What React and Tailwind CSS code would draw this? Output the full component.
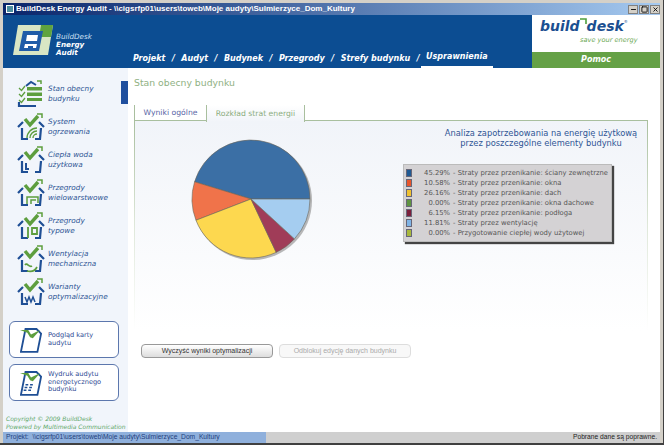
import { X, Minus, Square } from "lucide-react";

const NAV = ["Projekt", "Audyt", "Budynek", "Przegrody", "Strefy budynku", "Usprawnienia"];

const SIDE = [
  ["Stan obecny", "budynku", "list"],
  ["System", "ogrzewania", "heat"],
  ["Ciepła woda", "użytkowa", "water"],
  ["Przegrody", "wielowarstwowe", "layers"],
  ["Przegrody", "typowe", "wall"],
  ["Wentylacja", "mechaniczna", "air"],
  ["Warianty", "optymalizacyjne", "opt"],
];

const LEGEND = [
  ["#1f5a94", "45.29%", "Straty przez przenikanie: ściany zewnętrzne"],
  ["#e8552a", "10.58%", "Straty przez przenikanie: okna"],
  ["#efc12f", "26.16%", "Straty przez przenikanie: dach"],
  ["#5f9440", "0.00%", "Straty przez przenikanie: okna dachowe"],
  ["#7c1f3b", "6.15%", "Straty przez przenikanie: podłoga"],
  ["#7fb4e6", "11.81%", "Straty przez wentylację"],
  ["#a9b93c", "0.00%", "Przygotowanie ciepłej wody użytowej"],
];

const SLICES = [
  [45.29, "#3b6fa5"],
  [10.58, "#f0734a"],
  [26.16, "#fdd84f"],
  [6.15, "#a03c58"],
  [11.81, "#a5cdf0"],
];

function Pie() {
  let start = 0;
  const r = 59;
  const paths = SLICES.map(([pct, color]) => {
    const a0 = (start / 100) * Math.PI * 2;
    start += pct;
    const a1 = (start / 100) * Math.PI * 2;
    const d = `M64 64 L${64 + r * Math.cos(a0)} ${64 - r * Math.sin(a0)} A${r} ${r} 0 0 0 ${64 + r * Math.cos(a1)} ${64 - r * Math.sin(a1)} Z`;
    return <path key={color} d={d} fill={color} stroke="#6b6458" strokeWidth="0.6" />;
  });
  return (
    <svg width="134" height="134" viewBox="0 0 134 134">
      <circle cx="65.5" cy="65.5" r="59.5" fill="#8a8a8a" opacity="0.6" />
      {paths}
    </svg>
  );
}

// small house icon with the green tick, varies a bit per row
function SideIcon({ type }) {
  const blue = "#1f4f95";
  const green = "#5d9e3e";
  if (type === "list") {
    return (
      <svg width="28" height="28" viewBox="0 0 28 28" fill="none">
        <path d="M9 6 L14 2 L19 5" stroke={blue} strokeWidth="2" />
        <path d="M20 1h4v3" stroke={green} strokeWidth="1.5" />
        <rect x="10" y="7" width="15" height="3.5" fill={green} />
        <rect x="10" y="12.5" width="15" height="3.5" fill={green} />
        <rect x="10" y="18" width="15" height="3" fill={green} />
        <path d="M2 8l2.5 2.5L8 6M2 14l2.5 2.5L8 12M2 20l2.5 2.5L8 18" stroke={green} strokeWidth="1.3" />
        <path d="M2 22v4h17" stroke={blue} strokeWidth="2.2" />
      </svg>
    );
  }
  const inner = {
    heat: <path d="M10 25a10 10 0 0 1 10-10M13 25a7 7 0 0 1 7-7M16 25a4 4 0 0 1 4-4" stroke={green} strokeWidth="1.4" />,
    water: <path d="M9 17v6h3M9 26h2" stroke={blue} strokeWidth="2" />,
    layers: <path d="M10 25v-7h11v6M14 25v-4h5" stroke={green} strokeWidth="1.5" />,
    wall: <path d="M11 15v11M15 16h5v6h-5z" stroke={green} strokeWidth="1.8" />,
    air: <path d="M8 20c2-3 4 3 7 1M10 26c4 1 8 0 10-4" stroke={green} strokeWidth="1.7" />,
    opt: <path d="M8 19l2 5 2-5 2 5 2-5 2 5" stroke={blue} strokeWidth="1.5" />,
  }[type];
  return (
    <svg width="28" height="28" viewBox="0 0 28 28" fill="none">
      <path d="M1 14 L6 9M22 9 L27 14" stroke={blue} strokeWidth="2.2" />
      <path d="M20 1h5v4" stroke={green} strokeWidth="1.5" />
      <path d="M5 15v11h6M24 15l-1 11h-5" stroke={blue} strokeWidth="2.2" />
      {inner}
      <path d="M8 6l5 6 8-9" stroke={green} strokeWidth="3.4" />
    </svg>
  );
}

function DocIcon({ calc }) {
  return (
    <svg width="22" height="28" viewBox="0 0 24 30" fill="none">
      <path d="M6 3h12l5 5-4 20H1z" fill="#fff" stroke="#1f4f95" strokeWidth="2" />
      {calc && <path d="M6 17h3M11 17h3M5 20h3M10 20h3M4 23h3M9 23h3" stroke="#1f4f95" strokeWidth="1.6" />}
      <path d="M0 4h9l3 5 10-5-8 9-3-1-3-5z" fill="#5d9e3e" />
    </svg>
  );
}

function SideButton({ lines, calc }) {
  return (
    <div className="flex items-center gap-[6px] border border-[#5c77ad] rounded-md bg-white pl-[10px] h-[37px]">
      <DocIcon calc={calc} />
      <div className="text-[6.6px] leading-[7.5px] text-[#2d4a94] whitespace-nowrap">
        {lines.map((l) => (
          <div key={l}>{l}</div>
        ))}
      </div>
    </div>
  );
}

export default function App() {
  return (
    <div className="w-[664px] h-[445px] overflow-hidden flex flex-col bg-[#d4d0c8] border-r border-b-2 border-[#404040] pl-[3px] pr-[3px] pt-[3px] font-['DejaVu_Sans',sans-serif]">
      {/* title bar */}
      <div className="h-[12px] shrink-0 flex items-center bg-gradient-to-r from-[#0a246a] to-[#a6caf0] pl-[3px]">
        <div className="w-[8px] h-[8px] bg-[#4f8fa0] border border-white mr-[2px] shrink-0" />
        <span className="text-[8px] font-bold text-white whitespace-nowrap flex-1 overflow-hidden font-['Liberation_Sans',sans-serif]">
          BuildDesk Energy Audit - \\cigsrfp01\users\toweb\Moje audyty\Sulmierzyce_Dom_Kultury
        </span>
        <div className="flex gap-px">
          {[Minus, Square, X].map((Icon, i) => (
            <div key={i} className={`w-[10px] h-[9px] bg-[#d4d0c8] border border-[#808080] flex justify-center ${i === 0 ? "items-end" : "items-center"}`}>
              <Icon size={7} strokeWidth={3} color="#000" />
            </div>
          ))}
        </div>
      </div>

      {/* header */}
      <div className="h-[53px] shrink-0 flex bg-[#0c4d92]">
        <div className="w-[125px] shrink-0 flex items-center pl-[10px] pb-[3px]">
          <svg width="40" height="32" viewBox="0 0 40 32">
            <path d="M5 1h35l-5 30H0z" fill="#d8e6c4" />
            <path d="M28 1h12l-2 12H26z" fill="#5fa33f" />
            <path d="M10 7h20l-4 20H6z" fill="#1f5ca8" />
            <path d="M14 11h11l-1 6H13zM12 20h12l-1 4h-3v-2h-5v2h-4z" fill="#fff" />
          </svg>
          <div className="ml-[3px] mt-[10px] text-[7.2px] leading-[8px] italic text-[#cfe0f5]">
            <div>BuildDesk</div>
            <div className="font-bold text-white">Energy</div>
            <div className="font-bold text-white">Audit</div>
          </div>
        </div>
        <div className="flex-1 flex items-end pl-[5px] text-[8px] leading-[10px] font-bold italic text-white whitespace-nowrap">
          {NAV.map((n, i) => (
            <span key={n} className="flex">
              <span className={`pb-[4px] ${i === 5 ? "pb-[2px] border-b-2 border-white px-[5px] -mx-[5px]" : ""}`}>{n}</span>
              {i < 5 && <span className="px-[6.5px]">/</span>}
            </span>
          ))}
        </div>
        <div className="w-[128px] shrink-0 flex flex-col bg-white">
          <div className="flex-1 flex flex-col pl-[8px] pt-[2px]">
            <div className="flex items-start text-[14px] leading-[18px] font-bold italic text-[#1b4f91]">
              <span>build</span>
              <svg width="7" height="7" viewBox="0 0 7 7" fill="none" className="mt-[1px]">
                <path d="M0 1h6v5" stroke="#4f9e3c" strokeWidth="1.6" />
              </svg>
              <span>desk</span>
              <span className="text-[4px] leading-[10px] font-normal not-italic">®</span>
            </div>
            <span className="text-[6.6px] leading-[9px] italic text-[#6aa852] pl-[40px] pt-px whitespace-nowrap">save your energy</span>
          </div>
          <div className="h-[16px] bg-[#65a146] text-white text-[8px] font-bold italic flex items-center justify-center">Pomoc</div>
        </div>
      </div>

      {/* body */}
      <div className="flex-1 flex min-h-0 bg-white">
        <div className="w-[125px] shrink-0 flex flex-col bg-[#f1f5fb] relative">
          <div className="pt-[12px] pl-[14px] flex flex-col gap-[5px]">
            {SIDE.map(([a, b, t]) => (
              <div key={a + b} className="flex items-center gap-[3px] h-[28px]">
                <SideIcon type={t} />
                <div className="text-[7.3px] leading-[10px] italic text-[#2f5595] whitespace-nowrap">
                  <div>{a}</div>
                  <div>{b}</div>
                </div>
              </div>
            ))}
          </div>
          <div className="flex flex-col gap-[6px] pl-[6px] pr-[9px] mt-[15px]">
            <SideButton lines={["Podgląd karty", "audytu"]} />
            <SideButton lines={["Wydruk audytu", "energetycznego", "budynku"]} calc />
          </div>
          <div className="mt-auto pl-[3px] pb-px text-[6px] leading-[8px] italic text-[#5fa86a] whitespace-nowrap">
            <div>Copyright © 2009 BuildDesk</div>
            <div>Powered by Multimedia Communication</div>
          </div>
          <div className="absolute right-0 top-[13px] w-[7px] h-[23px] bg-[#1f4f9e]" />
        </div>

        <div className="flex-1 flex flex-col pl-[6px] pr-[12px] pt-[8px] min-w-0">
          <div className="text-[9.3px] leading-[14px] text-[#8fb183]">Stan obecny budynku</div>
          <div className="flex mt-[15px] h-[16px] text-[7.7px] relative z-10">
            <div className="w-[72px] border-l border-b border-[#a9bf9e] flex items-center justify-center text-[#5a66a6]">Wyniki ogólne</div>
            <div className="w-[99px] h-[17px] border-x border-[#a9bf9e] flex items-center justify-center text-[#8cad7f] bg-gradient-to-b from-white to-[#f1f4f9]">Rozkład strat energii</div>
            <div className="flex-1 border-b border-[#a9bf9e]" />
          </div>
          {/* panel border fades out towards the bottom */}
          <div className="h-[210px] px-px bg-gradient-to-b from-[#a9bf9e] via-[#dfe8da] to-white">
            <div className="h-full bg-gradient-to-b from-[#f1f4f9] to-white relative flex flex-col">
              <div className="self-end w-[200px] mr-[6px] text-center text-[8.3px] leading-[10px] text-[#2f5595] pt-[7px] whitespace-nowrap">
                <div>Analiza zapotrzebowania na energię użytkową</div>
                <div>przez poszczególne elementy budynku</div>
              </div>
              <div className="absolute left-[52px] top-[14px]">
                <Pie />
              </div>
              <div className="absolute left-[268px] top-[43px] w-[209px] h-[78px] bg-[#d4d2d4] border border-[#bbb] shadow-[2px_2px_1px_#444] pl-[2px] pt-[3px]">
                {LEGEND.map(([c, p, t]) => (
                  <div key={t} className="flex items-center h-[10px] text-[6.8px] text-[#555] whitespace-nowrap">
                    <div className="w-[6px] h-[8px] shrink-0 border border-[#667]" style={{ background: c }} />
                    <span className="w-[38px] text-right shrink-0">{p}</span>
                    <span className="ml-[3px]">- {t}</span>
                  </div>
                ))}
              </div>
            </div>
          </div>
          <div className="flex gap-[6px] ml-[7px] mt-[13px] font-['Liberation_Sans',sans-serif]">
            <button className="w-[132px] h-[14px] rounded-sm border border-[#999] bg-gradient-to-b from-white to-[#ddd] text-[7px] text-[#333]">Wyczyść wyniki optymalizacji</button>
            <button className="w-[132px] h-[14px] rounded-sm border border-[#ddd] bg-[#f8f8f8] text-[7px] text-[#aaa]">Odblokuj edycję danych budynku</button>
          </div>
        </div>
      </div>

      {/* status bar */}
      <div className="h-[11px] shrink-0 flex items-center bg-[#cfcfcf] text-[6.7px] font-['Liberation_Sans',sans-serif]">
        <div className="w-[263px] h-full bg-[#8fb0dc] text-[#23407c] pl-[3px] flex items-center whitespace-nowrap overflow-hidden">
          Projekt:&nbsp;&nbsp;\\cigsrfp01\users\toweb\Moje audyty\Sulmierzyce_Dom_Kultury
        </div>
        <div className="flex-1 text-right pr-[3px] text-[#222]">Pobrane dane są poprawne.</div>
      </div>
    </div>
  );
}
